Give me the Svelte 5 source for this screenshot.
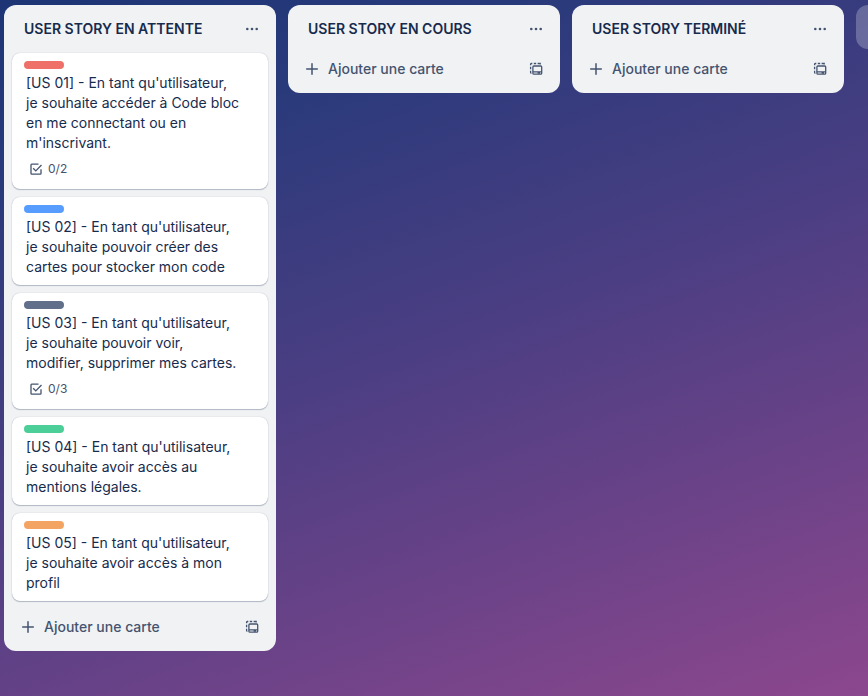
<script>
  const lists = [
    {
      title: 'USER STORY EN ATTENTE',
      cards: [
        { color: '#ef7068', text: "[US 01] - En tant qu'utilisateur, je souhaite accéder à Code bloc en me connectant ou en m'inscrivant.", checklist: '0/2' },
        { color: '#579dff', text: "[US 02] - En tant qu'utilisateur, je souhaite pouvoir créer des cartes pour stocker mon code" },
        { color: '#626f8a', text: "[US 03] - En tant qu'utilisateur, je souhaite pouvoir voir, modifier, supprimer mes cartes.", checklist: '0/3' },
        { color: '#4bce97', text: "[US 04] - En tant qu'utilisateur, je souhaite avoir accès au mentions légales." },
        { color: '#f4a462', text: "[US 05] - En tant qu'utilisateur, je souhaite avoir accès à mon profil" },
      ],
    },
    { title: 'USER STORY EN COURS', cards: [] },
    { title: 'USER STORY TERMINÉ', cards: [] },
  ];
</script>

<main class="board">
  {#each lists as list}
    <section class="list">
      <header class="head">
        <h2>{list.title}</h2>
        <button class="icon-button" aria-label="Menu de la liste">
          <svg width="16" height="16" viewBox="0 0 16 16" fill="currentColor" aria-hidden="true">
            <circle cx="3.3" cy="8" r="1.3" />
            <circle cx="8" cy="8" r="1.3" />
            <circle cx="12.7" cy="8" r="1.3" />
          </svg>
        </button>
      </header>

      {#if list.cards.length}
        <ul class="cards">
          {#each list.cards as card}
            <li class="card">
              <div class="label" style="background: {card.color}"></div>
              <a href="#card">{card.text}</a>
              {#if card.checklist}
                <div class="badge">
                  <svg width="16" height="16" viewBox="0 0 16 16" fill="none" stroke="currentColor" stroke-width="1.3" aria-hidden="true">
                    <path d="M10.5 3.2H3.7a.7.7 0 0 0-.7.7v8.6c0 .4.3.7.7.7h8.6c.4 0 .7-.3.7-.7V8.2" />
                    <path d="M5.2 7.2l2.6 2.7 5.7-5.9" />
                  </svg>
                  <span>{card.checklist}</span>
                </div>
              {/if}
            </li>
          {/each}
        </ul>
      {/if}

      <footer class="foot">
        <button class="add">
          <svg width="16" height="16" viewBox="0 0 16 16" fill="none" stroke="currentColor" stroke-width="1.5" stroke-linecap="round" aria-hidden="true">
            <path d="M8 2.7v10.6M2.7 8h10.6" />
          </svg>
          <span>Ajouter une carte</span>
        </button>
        <button class="icon-button" aria-label="Créer à partir d'un modèle">
          <svg width="16" height="16" viewBox="0 0 16 16" fill="none" stroke="currentColor" stroke-width="1.3" aria-hidden="true">
            <path d="M2.6 4.2V3.2c0-.4.3-.7.7-.7h1M5.8 2.5h2.4M9.6 2.5h2.6v1M2.6 5.8v2.4M2.6 9.8v1.8c0 .5.3.8.8.8" />
            <rect x="4.9" y="5" width="8.8" height="8.2" rx="1" />
            <path d="M4.9 10.8h8.8M9.6 12.1h2.4" />
          </svg>
        </button>
      </footer>
    </section>
  {/each}
  <button class="new-list" aria-label="Ajouter une autre liste"></button>
</main>

<style>
  :global(body) {
    margin: 0;
  }

  .board {
    box-sizing: border-box;
    display: flex;
    align-items: flex-start;
    gap: 12px;
    min-height: 100vh;
    padding: 5px 4px;
    overflow: hidden;
    background: linear-gradient(160deg, #1d3575 0%, #293a7b 19%, #4c3e83 50%, #8c478d 100%);
    color: #172b4d;
    font: 14px/20px Inter, 'Liberation Sans', sans-serif;
  }

  button {
    border: 0;
    padding: 0;
    background: none;
    color: #44546f;
    font: inherit;
    cursor: pointer;
  }

  svg {
    display: block;
    flex: none;
  }

  .list {
    box-sizing: border-box;
    flex: 0 0 272px;
    padding: 8px;
    border-radius: 12px;
    background: #f1f2f4;
  }

  .head {
    display: flex;
    align-items: center;
    justify-content: space-between;
    margin-bottom: 8px;
    padding-left: 12px;
  }

  h2 {
    margin: 0;
    font-size: 14px;
    font-weight: 600;
  }

  .icon-button {
    display: grid;
    place-items: center;
    flex: none;
    width: 32px;
    height: 32px;
    border-radius: 8px;
  }

  .cards {
    display: flex;
    flex-direction: column;
    gap: 8px;
    margin: 0 0 10px;
    padding: 0;
    list-style: none;
  }

  .card {
    padding: 8px 28px 8px 12px;
    border-radius: 8px;
    background: #fff;
    box-shadow: 0 1px 1px #091e4240, 0 0 1px #091e424f;
  }

  .label {
    width: 40px;
    height: 8px;
    margin-bottom: 4px;
    border-radius: 4px;
  }

  .card a {
    display: block;
    padding-left: 2px;
    color: #172b4d;
    text-decoration: none;
  }

  .badge {
    display: flex;
    align-items: center;
    gap: 4px;
    height: 24px;
    margin-top: 4px;
    padding-left: 4px;
    color: #44546f;
    font-size: 12px;
  }

  .foot {
    display: flex;
    align-items: center;
  }

  .add {
    display: flex;
    flex: 1;
    align-items: center;
    gap: 8px;
    height: 32px;
    padding-left: 8px;
    border-radius: 8px;
    font-weight: 500;
  }

  .new-list {
    flex: 0 0 272px;
    height: 44px;
    border-radius: 12px;
    background: #ffffff3d;
  }
</style>
